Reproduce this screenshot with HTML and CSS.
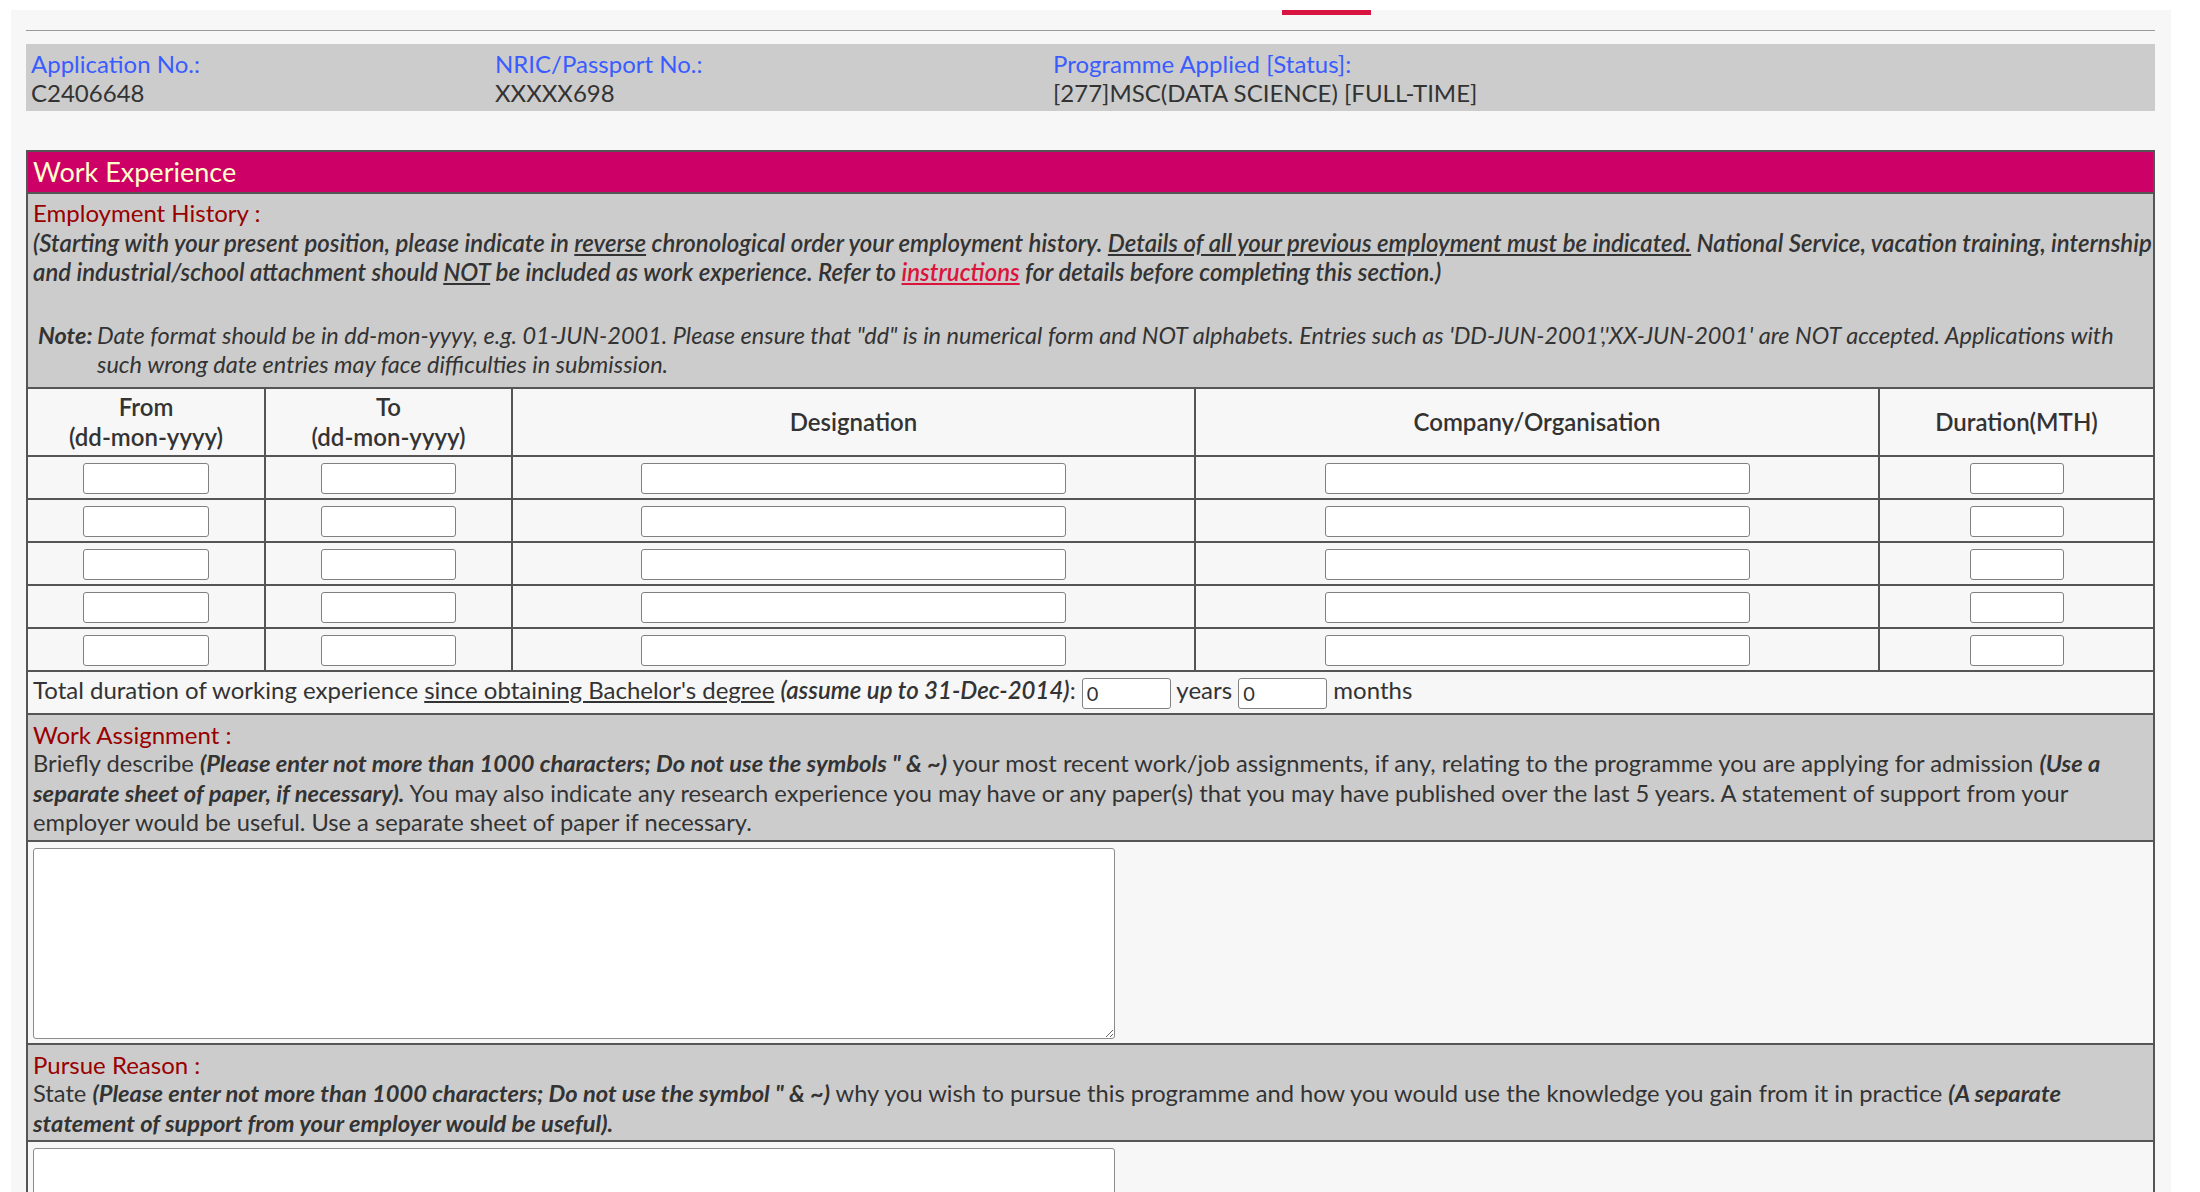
FILE: index.html
```html
<!DOCTYPE html>
<html>
<head>
<meta charset="utf-8">
<title>Work Experience</title>
<link rel="stylesheet" href="styles.css">
</head>
<body>
<div class="page">
  <div class="nav"><span class="nav-tab"></span></div>

  <div class="info">
    <div class="info-cell"><span class="lbl">Application No.:</span><span>C2406648</span></div>
    <div class="info-cell"><span class="lbl">NRIC/Passport No.:</span><span>XXXXX698</span></div>
    <div class="info-cell"><span class="lbl">Programme Applied [Status]:</span><span>[277]MSC(DATA SCIENCE) [FULL-TIME]</span></div>
  </div>

  <table class="we">
    <colgroup>
      <col class="c1"><col class="c2"><col class="c3"><col class="c4"><col class="c5">
    </colgroup>
    <tr class="r-title"><td colspan="5" class="title">Work Experience</td></tr>
    <tr>
      <td colspan="5" class="grey emp">
        <div class="sub">Employment History :</div>
        <div class="intro">(Starting with your present position, please indicate in <u>reverse</u> chronological order your employment history. <u>Details of all your previous employment must be indicated.</u> National Service, vacation training, internship and industrial/school attachment should <u>NOT</u> be included as work experience. Refer to <a href="#" class="link">instructions</a> for details before completing this section.)</div>
        <div class="note">
          <span class="note-lbl">Note:</span>
          <span class="note-txt">Date format should be in dd-mon-yyyy, e.g. 01-JUN-2001. Please ensure that "dd" is in numerical form and NOT alphabets. Entries such as 'DD-JUN-2001','XX-JUN-2001' are NOT accepted. Applications with such wrong date entries may face difficulties in submission.</span>
        </div>
      </td>
    </tr>
    <tr class="r-head">
      <th>From<br>(dd-mon-yyyy)</th>
      <th>To<br>(dd-mon-yyyy)</th>
      <th>Designation</th>
      <th>Company/Organisation</th>
      <th>Duration(MTH)</th>
    </tr>
    <tr class="r-in">
      <td><input class="in-from" type="text"></td>
      <td><input class="in-to" type="text"></td>
      <td><input class="in-wide" type="text"></td>
      <td><input class="in-wide" type="text"></td>
      <td><input class="in-dur" type="text"></td>
    </tr>
    <tr class="r-in">
      <td><input class="in-from" type="text"></td>
      <td><input class="in-to" type="text"></td>
      <td><input class="in-wide" type="text"></td>
      <td><input class="in-wide" type="text"></td>
      <td><input class="in-dur" type="text"></td>
    </tr>
    <tr class="r-in">
      <td><input class="in-from" type="text"></td>
      <td><input class="in-to" type="text"></td>
      <td><input class="in-wide" type="text"></td>
      <td><input class="in-wide" type="text"></td>
      <td><input class="in-dur" type="text"></td>
    </tr>
    <tr class="r-in">
      <td><input class="in-from" type="text"></td>
      <td><input class="in-to" type="text"></td>
      <td><input class="in-wide" type="text"></td>
      <td><input class="in-wide" type="text"></td>
      <td><input class="in-dur" type="text"></td>
    </tr>
    <tr class="r-in">
      <td><input class="in-from" type="text"></td>
      <td><input class="in-to" type="text"></td>
      <td><input class="in-wide" type="text"></td>
      <td><input class="in-wide" type="text"></td>
      <td><input class="in-dur" type="text"></td>
    </tr>
    <tr class="r-total">
      <td colspan="5" class="total">Total duration of working experience <u>since obtaining Bachelor's degree</u> <i class="assume">(assume up to 31-Dec-2014)</i>: <input class="in-num" type="text" value="0"> years <input class="in-num" type="text" value="0"> months</td>
    </tr>
    <tr>
      <td colspan="5" class="grey block">
        <div class="sub">Work Assignment :</div>
        <div>Briefly describe <b><i>(Please enter not more than 1000 characters; Do not use the symbols " &amp; ~)</i></b> your most recent work/job assignments, if any, relating to the programme you are applying for admission <b><i>(Use a separate sheet of paper, if necessary).</i></b> You may also indicate any research experience you may have or any paper(s) that you may have published over the last 5 years. A statement of support from your employer would be useful. Use a separate sheet of paper if necessary.</div>
      </td>
    </tr>
    <tr>
      <td colspan="5" class="area-cell"><textarea class="area"></textarea></td>
    </tr>
    <tr>
      <td colspan="5" class="grey block">
        <div class="sub">Pursue Reason :</div>
        <div>State <b><i>(Please enter not more than 1000 characters; Do not use the symbol " &amp; ~)</i></b> why you wish to pursue this programme and how you would use the knowledge you gain from it in practice <b><i>(A separate statement of support from your employer would be useful).</i></b></div>
      </td>
    </tr>
    <tr>
      <td colspan="5" class="area-cell"><textarea class="area"></textarea></td>
    </tr>
  </table>
</div>
</body>
</html>
```

FILE: styles.css
```css
* { box-sizing: border-box; }

html, body {
  margin: 0;
  padding: 0;
  background: #ffffff;
}

body {
  font-family: Lato, "Open Sans", "Liberation Sans", sans-serif;
  color: #333333;
  font-size: 24px;
  line-height: 29.5px;
}

td, th {
  padding: 0;
}

b {
  font-weight: 700;
}

.page {
  margin: 10px 0 0 11px;
  width: 2160px;
  min-height: 1400px;
  background: #f7f7f7;
  padding: 0 16px 40px 15px;
}

.nav {
  height: 21px;
  border-bottom: 1px solid #9a9a9a;
  display: flex;
}

.nav-tab {
  margin-left: 1256px;
  width: 89px;
  height: 5px;
  background: #d81440;
}

.info {
  margin-top: 13px;
  height: 67px;
  background: #cccccc;
  padding: 5px 5px;
  display: grid;
  grid-template-columns: 464px 558px 1fr;
  font-size: 24px;
  line-height: 29px;
}

.info-cell {
  display: flex;
  flex-direction: column;
}

.lbl {
  color: #3a5cff;
}

.we {
  margin-top: 39px;
  width: 2129px;
  table-layout: fixed;
  border-spacing: 0;
  border-left: 2px solid #555555;
  border-top: 2px solid #555555;
}

.we td, .we th {
  border-right: 2px solid #555555;
  border-bottom: 2px solid #555555;
}

.c1 { width: 238px; }
.c2 { width: 247px; }
.c3 { width: 683px; }
.c4 { width: 684px; }
.c5 { width: 275px; }

.title {
  height: 42px;
  background: #cc0066;
  color: #ffffcc;
  font-size: 27px;
  line-height: 32px;
  padding: 0 5px;
  vertical-align: middle;
}

.grey {
  background: #cccccc;
}

.emp {
  padding: 4px 1px 7px 5px;
}

.sub {
  color: #990000;
}

.intro {
  font-style: italic;
  font-weight: 600;
}

.link {
  color: #dc143c;
}

.note {
  margin-top: 34px;
  margin-left: 5px;
  display: grid;
  grid-template-columns: 59px 1fr;
  font-size: 23.5px;
}

.note-lbl {
  font-weight: 700;
  font-style: italic;
}

.note-txt {
  font-style: italic;
  padding-right: 4px;
}

.r-head th {
  height: 68px;
  font-weight: 600;
  text-align: center;
  vertical-align: middle;
}

.r-in td {
  height: 43px;
  text-align: center;
  vertical-align: middle;
}

input {
  font-family: Lato, "Open Sans", sans-serif;
  font-size: 20px;
  color: #333333;
  height: 31px;
  border: 1px solid #808080;
  border-radius: 3px;
  background: #ffffff;
  padding: 0 4px;
  vertical-align: middle;
  margin: 0;
}

.in-from { width: 126px; }
.in-to { width: 135px; }
.in-wide { width: 425px; }
.in-dur { width: 94px; }
.in-num { width: 89px; }

.total {
  height: 43px;
  padding: 0 5px;
  vertical-align: middle;
}

.assume {
  font-weight: 600;
}

.block {
  padding: 5px 5px 2px;
  font-size: 23.7px;
}

.block .sub {
  font-size: 24px;
}

.area-cell {
  padding: 6px 5px 4px;
}

.area {
  display: block;
  width: 1082px;
  height: 191px;
  border: 1px solid #8c8c8c;
  border-radius: 3px;
  background: #ffffff;
  margin: 0;
}
```
